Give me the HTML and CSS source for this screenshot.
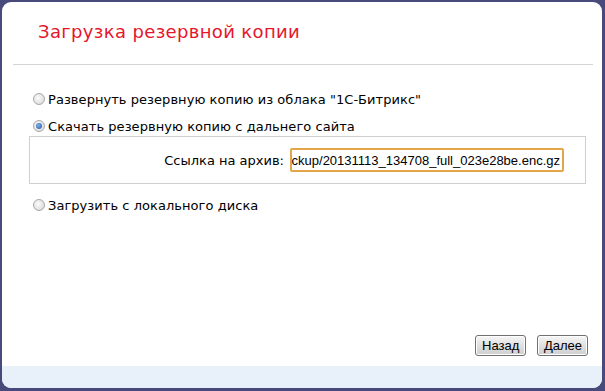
FILE: index.html
```html
<!DOCTYPE html>
<html>
<head>
<meta charset="utf-8">
<link rel="stylesheet" href="styles.css">
</head>
<body>
<div class="panel">
  <h1 class="title">Загрузка резервной копии</h1>
  <div class="sep"></div>
  <div class="content">
    <label class="opt"><span class="radio"></span>Развернуть резервную копию из облака "1С-Битрикс"</label>
    <label class="opt opt2"><span class="radio checked"></span>Скачать резервную копию с дальнего сайта</label>
    <div class="box">
      <span class="lbl">Ссылка на архив:</span>
      <div class="field"><span>http://www.example.ru/bitrix/backup/20131113_134708_full_023e28be.enc.gz</span></div>
    </div>
    <label class="opt opt3"><span class="radio"></span>Загрузить с локального диска</label>
  </div>
  <div class="buttons">
    <button class="btn">Назад</button>
    <button class="btn">Далее</button>
  </div>
  <div class="footer"></div>
</div>
</body>
</html>
```
FILE: styles.css
```css
html, body { margin: 0; padding: 0; }
body {
  background: #474a7b;
  width: 605px;
  height: 391px;
  overflow: hidden;
  font-family: "DejaVu Sans", Verdana, sans-serif;
}
.panel {
  margin: 2px 3px 3px 2px;
  height: 386px;
  background: #fff;
  border-radius: 9px;
  overflow: hidden;
  display: flex;
  flex-direction: column;
  position: relative;
}
.title {
  margin: 0;
  padding: 19px 0 0 36px;
  height: 32px;
  font-size: 18px;
  font-weight: normal;
  color: #e5162c;
  letter-spacing: 0.35px;
}
.sep {
  margin: 11px 9px 0 11px;
  border-top: 1px solid #d4d4d4;
}
.content {
  padding: 26px 0 0 31px;
  display: flex;
  flex-direction: column;
  font-size: 13px;
  color: #000;
  flex: 1;
}
.opt {
  display: flex;
  align-items: center;
  height: 16px;
  letter-spacing: 0.05px;
}
.opt2 { margin-top: 11px; }
.opt3 { margin-top: 13px; }
.radio {
  width: 12px;
  height: 12px;
  border-radius: 50%;
  border: 1px solid #a8a8a8;
  background: radial-gradient(circle at 40% 40%, #fafafa, #d6d6d6);
  margin-right: 3px;
  box-sizing: border-box;
  position: relative;
}
.radio.checked::after {
  content: "";
  position: absolute;
  left: 2px; top: 2px;
  width: 6px; height: 6px;
  border-radius: 50%;
  background: radial-gradient(circle at 40% 40%, #7fb4ee, #1d4f9a);
}
.box {
  margin: 2px 16px 0 -4px;
  height: 46px;
  border: 1px solid #cfcfcf;
  display: flex;
  align-items: center;
  justify-content: flex-end;
  padding-right: 21px;
}
.lbl {
  margin-right: 6px;
}
.field {
  width: 268px;
  height: 20px;
  border: 2px solid #e2a54a;
  border-radius: 2px;
  display: flex;
  justify-content: flex-end;
  align-items: center;
  overflow: hidden;
  white-space: nowrap;
  font-family: "Liberation Sans", Arial, sans-serif;
  font-size: 13px;
  padding-right: 2px;
}
.field span { flex: none; }
.buttons {
  display: flex;
  justify-content: flex-end;
  gap: 11px;
  padding: 0 14px 10px 0;
}
.btn {
  font-family: "Liberation Sans", Arial, sans-serif;
  font-size: 13px;
  color: #000;
  height: 21px;
  padding: 0 6px;
  width: 51px;
  border: 1px solid #707070;
  border-radius: 3px;
  background: linear-gradient(#f6f6f6, #e0e0e0 50%, #cfcfcf);
  box-shadow: inset 0 0 0 1px #fff;
}
.footer {
  height: 22px;
  background: #e8f1f9;
}
```
